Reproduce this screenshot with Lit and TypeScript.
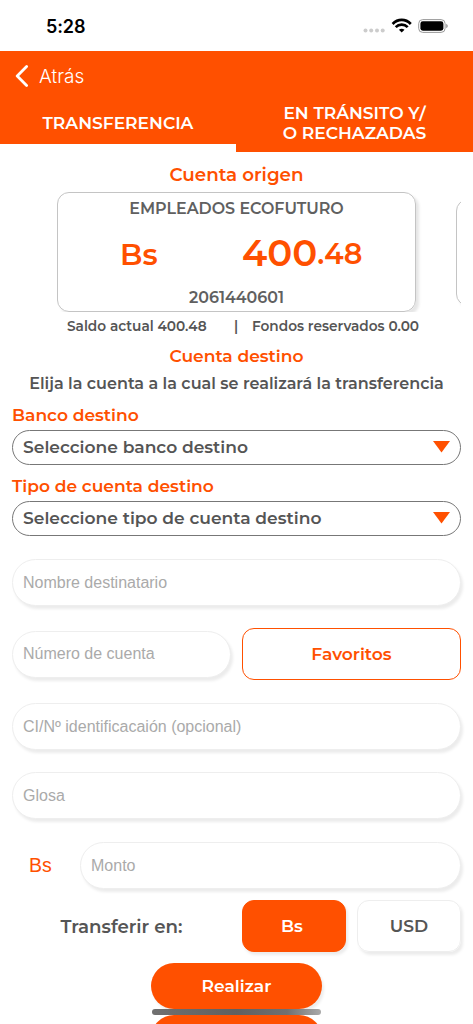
import { LitElement, html, css, svg } from "lit";
import { customElement, property } from "lit/decorators.js";

@customElement("status-bar")
class StatusBar extends LitElement {
  static styles = css`
    :host {
      display: flex;
      justify-content: space-between;
      height: 51px;
      padding: 0 25px 0 46px;
      box-sizing: border-box;
      color: #000;
    }
    .time {
      padding-top: 15px;
      font: 600 18px/23px Inter, sans-serif;
      letter-spacing: -0.1px;
    }
    svg {
      display: block;
      margin-top: 16px;
    }
  `;

  render() {
    return html`
      <span class="time">5:28</span>
      <svg width="85" height="20" viewBox="0 0 85 20">
        ${[2.5, 8.2, 14, 19.7].map(
          (x) => svg`<circle cx=${x} cy="14.6" r="2" fill="#ccc" />`
        )}
        <g fill="none" stroke="#000" stroke-width="2.7">
          <path d="M29.6 8 C34.8 2.6 42.6 2.6 47.8 8" />
          <path d="M32.7 11.1 C36 7.8 41.4 7.8 44.7 11.1" />
        </g>
        <path d="M38.7 16.5 L35.9 13.7 Q38.7 11.6 41.5 13.7 Z" />
        <rect x="55.7" y="3.6" width="26.4" height="12.8" rx="4" fill="none" stroke="#999" />
        <rect x="57.4" y="5.3" width="23" height="9.4" rx="2.4" />
        <path d="M83.2 7.8 Q84.8 8.6 84.8 10 Q84.8 11.4 83.2 12.2 Z" fill="#999" />
      </svg>
    `;
  }
}

@customElement("app-select")
class SelectField extends LitElement {
  @property({ type: String })
  label: string = "";

  @property({ type: String })
  value: string = "";

  static styles = css`
    :host {
      display: block;
      font-family: Montserrat, Inter, sans-serif;
      font-size: 17.1px;
      font-weight: 600;
    }
    .label {
      height: 29px;
      line-height: 27px;
      color: #ff5000;
    }
    .box {
      display: flex;
      align-items: center;
      justify-content: space-between;
      height: 35px;
      padding: 0 10px 2px;
      box-sizing: border-box;
      border: 1px solid #777;
      border-radius: 18px;
      color: #555;
    }
  `;

  render() {
    return html`
      <div class="label">${this.label}</div>
      <div class="box">
        <span>${this.value}</span>
        <svg width="17" height="12" viewBox="0 0 17 12">
          <path d="M0 0H17L8.5 11.5Z" fill="#ff5000" />
        </svg>
      </div>
    `;
  }
}

@customElement("app-input")
class InputField extends LitElement {
  @property({ type: String })
  placeholder: string = "";

  static styles = css`
    :host {
      display: block;
      min-width: 0;
    }
    input {
      display: block;
      width: 100%;
      height: 47px;
      padding: 0 10px;
      box-sizing: border-box;
      border: 1px solid #eee;
      border-radius: 24px;
      outline: none;
      background: #fff;
      box-shadow: 2px 3px 3px rgba(0, 0, 0, 0.08);
      font: 16px "Liberation Sans", Arial, sans-serif;
    }
    input::placeholder {
      color: #aaa;
      opacity: 1;
    }
  `;

  render() {
    return html`<input placeholder=${this.placeholder} />`;
  }
}

@customElement("app-root")
class AppRoot extends LitElement {
  static styles = css`
    :host {
      display: block;
      height: 1024px;
      overflow: hidden;
      background: #fff;
      color: #555;
      font-family: Montserrat, Inter, sans-serif;
      font-weight: 600;
    }
    .back {
      display: flex;
      align-items: center;
      gap: 10px;
      height: 50px;
      padding-left: 15px;
      background: #ff5000;
      color: #fff;
      font: 300 19px Inter, sans-serif;
    }
    .tabs {
      display: grid;
      grid-template-columns: 236px 1fr;
      align-items: start;
      height: 51px;
      color: #fff;
      font-size: 17.1px;
      line-height: 20px;
      text-align: center;
    }
    .tab {
      display: flex;
      align-items: center;
      justify-content: center;
      height: 43px;
      background: #ff5000;
    }
    .tab.wide {
      height: 51px;
      padding-bottom: 8px;
      box-sizing: border-box;
    }
    .title {
      text-align: center;
      color: #ff5000;
    }
    .origin {
      height: 40px;
      font-size: 18.3px;
      line-height: 45px;
    }
    .carousel {
      display: flex;
      align-items: center;
      gap: 40px;
      height: 120px;
      margin: 0 12px;
      padding-left: 45px;
      overflow: hidden;
    }
    .card {
      display: flex;
      flex-direction: column;
      flex: 0 0 359px;
      height: 120px;
      box-sizing: border-box;
      border: 1px solid #c4c4c4;
      border-radius: 12px;
      box-shadow: 3px 3px 3px rgba(0, 0, 0, 0.1);
      text-align: center;
      font-size: 15.9px;
      line-height: 20px;
      color: #606060;
    }
    .card.next {
      height: 107px;
    }
    .name {
      padding-top: 6px;
    }
    .balance {
      display: flex;
      align-items: center;
      height: 69px;
      padding-left: 62px;
      box-sizing: border-box;
      line-height: 66px;
      color: #ff5000;
    }
    .currency {
      width: 122px;
      text-align: left;
      font-size: 29.5px;
    }
    .whole {
      padding-bottom: 2px;
      font-size: 37.2px;
    }
    .cents {
      font-size: 28.6px;
    }
    .details {
      display: grid;
      grid-template-columns: 167px 18px auto;
      height: 31px;
      padding-left: 67px;
      font-size: 13.7px;
      line-height: 29px;
    }
    .destination {
      height: 27px;
      font-size: 17.1px;
      line-height: 26px;
    }
    .hint {
      height: 31px;
      line-height: 27px;
      text-align: center;
      font-size: 16px;
    }
    .form {
      display: flex;
      flex-direction: column;
      padding: 0 12px;
    }
    .type {
      margin-top: 7px;
      margin-bottom: 23px;
    }
    .row {
      display: grid;
      grid-template-columns: 219px 219px;
      justify-content: space-between;
      align-items: center;
      height: 52px;
      margin: 22px 0 23px;
    }
    .btn {
      display: flex;
      align-items: center;
      justify-content: center;
      height: 52px;
      padding-bottom: 2px;
      box-sizing: border-box;
      border: 1px solid #eee;
      border-radius: 12px;
      font-size: 17.1px;
      box-shadow: 2px 3px 3px rgba(0, 0, 0, 0.08);
    }
    .btn.outline {
      border-color: #ff5000;
      color: #ff5000;
      box-shadow: none;
    }
    .btn.active {
      padding-right: 4px;
      border-color: #ff5000;
      background: #ff5000;
      color: #fff;
    }
    .glosa {
      margin: 22px 0 23px;
    }
    .amount {
      display: grid;
      grid-template-columns: 68px 1fr;
      align-items: center;
    }
    .unit {
      padding-left: 17px;
      font: 19.5px "Liberation Sans", Arial, sans-serif;
      color: #ff5000;
    }
    .transfer {
      display: grid;
      grid-template-columns: 219px 104px 104px;
      gap: 11px;
      align-items: center;
      margin-top: 11px;
    }
    .transfer-label {
      text-align: center;
      font-size: 18.2px;
    }
    .actions {
      display: flex;
      flex-direction: column;
      align-items: center;
      padding-top: 11px;
    }
    .pill {
      flex: none;
      width: 171px;
      height: 46px;
      border-radius: 23px;
      background: #ff5000;
      box-shadow: 2px 3px 3px rgba(0, 0, 0, 0.08);
      color: #fff;
      font-size: 17.1px;
      line-height: 46px;
      text-align: center;
    }
    .scrollbar {
      width: 169px;
      height: 5.5px;
      border-radius: 3px;
      background: linear-gradient(90deg, #707070, #606060 50%, #707070 80%, #aaa);
    }
  `;

  render() {
    return html`
      <status-bar></status-bar>
      <div class="back">
        <svg width="14" height="22" viewBox="0 0 14 22">
          <path
            d="M11.6 1.6L2.2 11L11.6 20.4"
            fill="none"
            stroke="#fff"
            stroke-width="2.8"
            stroke-linecap="round"
            stroke-linejoin="round"
          />
        </svg>
        <span>Atrás</span>
      </div>
      <div class="tabs">
        <div class="tab">TRANSFERENCIA</div>
        <div class="tab wide">EN TRÁNSITO Y/<br />O RECHAZADAS</div>
      </div>

      <div class="title origin">Cuenta origen</div>
      <div class="carousel">
        <div class="card">
          <div class="name">EMPLEADOS ECOFUTURO</div>
          <div class="balance">
            <span class="currency">Bs</span>
            <span class="whole">400</span>
            <span class="cents">.48</span>
          </div>
          <div class="number">2061440601</div>
        </div>
        <div class="card next"></div>
      </div>
      <div class="details">
        <span>Saldo actual 400.48</span>
        <span>|</span>
        <span>Fondos reservados 0.00</span>
      </div>

      <div class="title destination">Cuenta destino</div>
      <div class="hint">Elija la cuenta a la cual se realizará la transferencia</div>

      <div class="form">
        <app-select label="Banco destino" value="Seleccione banco destino"></app-select>
        <app-select
          class="type"
          label="Tipo de cuenta destino"
          value="Seleccione tipo de cuenta destino"
        ></app-select>
        <app-input placeholder="Nombre destinatario"></app-input>
        <div class="row">
          <app-input placeholder="Número de cuenta"></app-input>
          <div class="btn outline">Favoritos</div>
        </div>
        <app-input placeholder="CI/Nº identificacaión (opcional)"></app-input>
        <app-input class="glosa" placeholder="Glosa"></app-input>
        <div class="amount">
          <span class="unit">Bs</span>
          <app-input placeholder="Monto"></app-input>
        </div>
        <div class="transfer">
          <div class="transfer-label">Transferir en:</div>
          <div class="btn active">Bs</div>
          <div class="btn">USD</div>
        </div>
      </div>

      <div class="actions">
        <div class="pill">Realizar</div>
        <div class="scrollbar"></div>
        <div class="pill"></div>
      </div>
    `;
  }
}

export default AppRoot;
